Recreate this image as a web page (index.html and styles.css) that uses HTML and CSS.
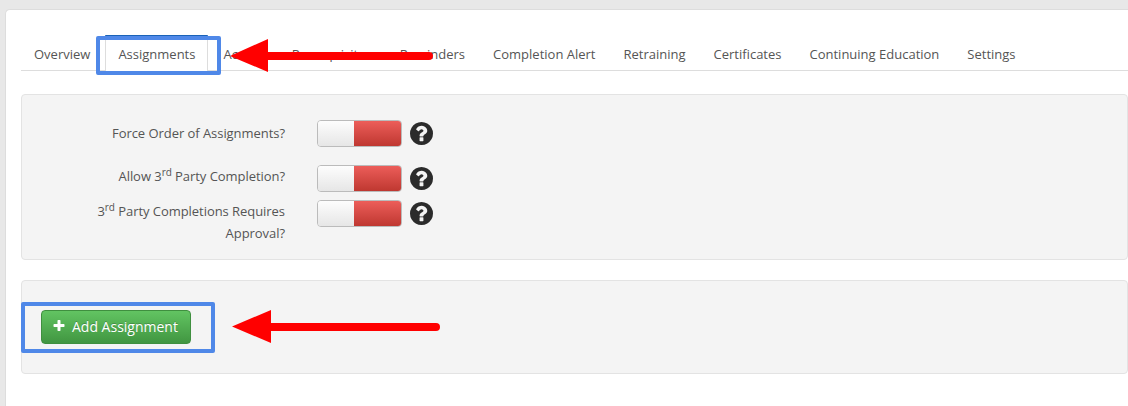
FILE: index.html
```html
<!DOCTYPE html>
<html lang="en">
<head>
    <meta charset="UTF-8">
    <title>Assignments</title>
    <link rel="stylesheet" href="styles.css">
</head>
<body>

<svg class="defs">
    <symbol id="icon-help" viewBox="128 128 1536 1536"><path d="M1024 1376v-192q0-14-9-23t-23-9h-192q-14 0-23 9t-9 23v192q0 14 9 23t23 9h192q14 0 23-9t9-23zm256-672q0-88-55.500-163t-138.500-116-170-41q-243 0-371 213-15 24 8 42l132 100q7 6 19 6 16 0 25-12 53-68 86-92 34-24 86-24 48 0 85.500 26t37.500 59q0 38-20 61t-68 45q-63 28-115.500 86.500t-52.500 125.500v36q0 14 9 23t23 9h192q14 0 23-9t9-23q0-19 21.500-49.500t54.500-49.500q32-18 49-28.500t46-35 44.500-48 28-60.500 12.500-81zm384 192q0 209-103 385.500t-279.500 279.500-385.500 103-385.500-103-279.500-279.500-103-385.500 103-385.500 279.500-279.500 385.500-103 385.500 103 279.500 279.500 103 385.500z"/></symbol>
</svg>

<div class="card">
    <ul class="tabs">
        <li>Overview</li>
        <li class="active">Assignments</li>
        <li>Access</li>
        <li>Prerequisites</li>
        <li>Reminders</li>
        <li>Completion Alert</li>
        <li>Retraining</li>
        <li>Certificates</li>
        <li>Continuing Education</li>
        <li>Settings</li>
    </ul>

    <div class="panel options">
        <div class="row row-first">
            <label>Force Order of Assignments?</label>
            <div class="toggle"><span class="off"></span><span class="on"></span></div>
            <svg class="help"><use href="#icon-help"/></svg>
        </div>
        <div class="row row-second">
            <label>Allow 3<sup>rd</sup> Party Completion?</label>
            <div class="toggle"><span class="off"></span><span class="on"></span></div>
            <svg class="help"><use href="#icon-help"/></svg>
        </div>
        <div class="row">
            <label>3<sup>rd</sup> Party Completions Requires Approval?</label>
            <div class="toggle"><span class="off"></span><span class="on"></span></div>
            <svg class="help"><use href="#icon-help"/></svg>
        </div>
    </div>

    <div class="panel actions">
        <button class="btn-add">
            <svg class="plus" viewBox="128 128 1536 1536"><path d="M1600 736v192q0 40-28 68t-68 28h-416v416q0 40-28 68t-68 28h-192q-40 0-68-28t-28-68v-416h-416q-40 0-68-28t-28-68v-192q0-40 28-68t68-28h416v-416q0-40 28-68t68-28h192q40 0 68 28t28 68v416h416q40 0 68 28t28 68z"/></svg>
            Add Assignment
        </button>
    </div>
</div>

<!-- annotations drawn on top of the screenshot -->
<div class="mark mark-tab"></div>
<div class="mark mark-btn"></div>
<svg class="arrows" viewBox="0 0 1128 406">
    <path d="M230 56 L268 39 V52 H429 a4 4 0 0 1 0 8 H268 V72 Z"/>
    <path d="M232 326.500 L271 310 V323 H436 a4 4 0 0 1 0 8 H271 V343 Z"/>
</svg>

</body>
</html>
```

FILE: styles.css
```css
html, body {
    height: 100%;
}
body {
    margin: 0;
    overflow: hidden;
    background-color: #e8e8e8;
    font-family: "Open Sans", Arial, sans-serif;
    font-size: 13px;
    color: #555;
}
.defs {
    display: none;
}
.card {
    margin: 9px 0 0 5px;
    padding: 26px 0 0 15px;
    height: 400px;
    box-sizing: border-box;
    background-color: #fff;
    border-top: 1px solid #ddd;
    border-left: 1px solid #ddd;
    border-top-left-radius: 5px;
}
.tabs {
    display: flex;
    gap: 2px;
    height: 34px;
    margin: 0 0 23px;
    padding: 0;
    list-style: none;
    border-bottom: 1px solid #ddd;
}
.tabs li {
    padding: 8px 12px 0;
    border: 1px solid transparent;
    border-bottom: 0;
    line-height: 18px;
}
.tabs li.active {
    height: 36px;
    margin-top: -1px;
    box-sizing: border-box;
    background-color: #fff;
    border-left-color: #ddd;
    border-right-color: #ddd;
    border-top: 2px solid #1a62b8;
}
.panel {
    box-sizing: border-box;
    background-color: #f4f4f4;
    border: 1px solid #e3e3e3;
    border-radius: 4px;
}
.options {
    height: 166px;
    margin-bottom: 20px;
    padding: 25px 0 0 72px;
}
.row {
    display: flex;
    align-items: flex-start;
}
.row-first {
    margin-bottom: 18px;
}
.row-second {
    margin-bottom: 8px;
}
.row label {
    width: 191px;
    margin-right: 32px;
    text-align: right;
    line-height: 22px;
    letter-spacing: -0.05px;
}
.row-first label {
    padding-top: 2px;
}
sup {
    font-size: 10px;
    line-height: 0;
}
.toggle {
    display: flex;
    width: 85px;
    height: 27px;
    box-sizing: border-box;
    border: 1px solid #bbb;
    border-radius: 4px;
    overflow: hidden;
}
.toggle .off {
    flex: 0 0 36px;
    background: linear-gradient(#fdfdfd, #e6e6e6);
}
.toggle .on {
    flex: 1;
    margin: -1px -1px -1px 0;
    background: linear-gradient(#ee5f5b, #bd362f);
}
.help {
    width: 23px;
    height: 23px;
    margin: 2px 0 0 8px;
    fill: #2b2b2b;
}
.actions {
    height: 94px;
    padding: 29px 0 0 19px;
}
.btn-add {
    display: flex;
    align-items: center;
    gap: 7px;
    width: 150px;
    height: 34px;
    padding: 0 0 2px 11px;
    box-sizing: border-box;
    background: linear-gradient(#62c462, #419641);
    border: 1px solid #3f8f3f;
    border-radius: 4px;
    color: #fff;
    font-family: inherit;
    font-size: 14px;
    font-weight: 400;
    text-shadow: 0 -1px 0 rgba(0, 0, 0, 0.2);
}
.plus {
    width: 12px;
    height: 12px;
    fill: #fff;
}
.mark {
    position: absolute;
    box-sizing: border-box;
    border: 4px solid #4f88e8;
    border-radius: 2px;
}
.mark-tab {
    left: 96px;
    top: 36px;
    width: 125px;
    height: 39px;
}
.mark-btn {
    left: 21px;
    top: 302px;
    width: 194px;
    height: 51px;
}
.arrows {
    position: absolute;
    left: 0;
    top: 0;
    width: 1128px;
    height: 406px;
    fill: #f00;
}
```
